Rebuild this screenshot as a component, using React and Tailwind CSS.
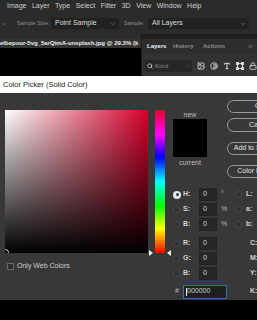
import React from 'react';
import { ChevronDown, ChevronsRight, Search, Image, Contrast, Type, Lock } from 'lucide-react';

const menu = ['Image', 'Layer', 'Type', 'Select', 'Filter', '3D', 'View', 'Window', 'Help'];

const Radio = ({ on }) =>
  on ? (
    <div className="w-[8px] h-[8px] rounded-full bg-[#e8e8e8] flex items-center justify-center">
      <div className="w-[3px] h-[3px] rounded-full bg-[#383838]"></div>
    </div>
  ) : (
    <div className="w-[7px] h-[7px] rounded-full bg-[#303030] border border-[#4c4c4c]"></div>
  );

const FieldRow = ({ on, label, value, unit, right, cmyk }) => (
  <div className="h-[15px] flex items-center text-[7px] text-[#d2d2d2]">
    <div className="w-[11px] pl-[1px]">
      <Radio on={on} />
    </div>
    <div className="w-[16px] font-bold">{label}</div>
    <div className="w-[18px] h-[13px] bg-[#272727] border border-[#222] flex items-center pl-[3px]">
      {value}
    </div>
    <div className="w-[18px] pl-[4px] text-[#bdbdbd]">{unit}</div>
    <div className="w-[11px]">{!cmyk && <Radio />}</div>
    <div className={cmyk ? 'pl-[4px] font-bold' : 'font-bold'}>{right}</div>
  </div>
);

const PillButton = ({ children, className }) => (
  <div
    className={`w-[66px] shrink-0 rounded-full border border-[#9c9c9c] flex items-center justify-center text-[7px] text-[#e2e2e2] ${className}`}
  >
    {children}
  </div>
);

const ShapeIcon = () => (
  <svg width="8" height="8" viewBox="0 0 8 8" fill="none" stroke="#d8d8d8" strokeWidth="1">
    <rect x="1.5" y="1.5" width="5" height="5" />
    <rect x="0.5" y="0.5" width="2" height="2" fill="#d8d8d8" />
    <rect x="5.5" y="0.5" width="2" height="2" fill="#d8d8d8" />
    <rect x="0.5" y="5.5" width="2" height="2" fill="#d8d8d8" />
    <rect x="5.5" y="5.5" width="2" height="2" fill="#d8d8d8" />
  </svg>
);

export default function App() {
  return (
    <div className="w-[257px] h-[320px] overflow-hidden bg-black flex flex-col font-['Liberation_Sans',Arial,sans-serif]">
      {/* menu bar */}
      <div className="h-[13px] shrink-0 bg-[#2b2b2b] flex items-center pl-[7px] gap-[5.5px] text-[7px] text-[#cdcdcd]">
        {menu.map((m) => (
          <span key={m}>{m}</span>
        ))}
      </div>

      {/* options bar */}
      <div className="h-[21px] shrink-0 bg-[#2b2b2b] flex items-center">
        <div className="w-[17px] pl-[1px] text-[#9a9a9a]">
          <ChevronDown size={6} strokeWidth={2} />
        </div>
        <div className="w-[34px] text-[5.5px] text-[#8f8f8f]">Sample Size:</div>
        <div className="w-[68px] h-[11px] bg-[#212121] flex items-center justify-between pl-[4px] pr-[3px] text-[7px] text-[#dedede]">
          <span>Point Sample</span>
          <ChevronDown size={6} strokeWidth={2} className="text-[#9a9a9a]" />
        </div>
        <div className="w-[5px]"></div>
        <div className="w-[24px] text-[5.5px] text-[#8f8f8f]">Sample:</div>
        <div className="w-[101px] h-[11px] bg-[#212121] flex items-center justify-between pl-[4px] pr-[3px] text-[7px] text-[#dedede]">
          <span>All Layers</span>
          <ChevronDown size={6} strokeWidth={2} className="text-[#9a9a9a]" />
        </div>
      </div>

      {/* document + layers panel */}
      <div className="h-[42px] shrink-0 flex">
        <div className="w-[141px] shrink-0 flex flex-col">
          <div className="h-[14px] bg-[#2b2b2b] flex items-end">
            <div className="h-[9px] w-full bg-[#333] flex items-center whitespace-nowrap overflow-hidden text-[6px] text-[#ececec] font-bold">
              elbepour-5vg_5arQimA-unsplash.jpg @ 29.3% (k
            </div>
          </div>
          <div className="flex-1 bg-black"></div>
        </div>
        <div className="flex-1 flex flex-col border-l border-[#1b1b1b]">
          <div className="h-[5px] bg-[#1f1f1f]"></div>
          <div className="h-[15px] bg-[#2d2d2d] flex items-center pl-[5px] text-[6px] font-bold">
            <span className="w-[26px] text-[#f0f0f0]">Layers</span>
            <span className="w-[30px] text-[#8c8c8c]">History</span>
            <span className="text-[#8c8c8c]">Actions</span>
            <ChevronsRight size={7} className="ml-auto mr-[3px] text-[#9a9a9a]" />
          </div>
          <div className="flex-1 bg-[#323232] flex items-start pt-[6px] pl-[3px] gap-[5px]">
            <div className="w-[47px] h-[12px] bg-[#262626] rounded-[2px] flex items-center px-[2px] gap-[2px] text-[6px] text-[#6f6f6f]">
              <Search size={6} strokeWidth={3} className="text-[#cfcfcf]" />
              <span className="font-bold">Kind</span>
              <ChevronDown size={5} className="ml-auto" />
            </div>
            <div className="h-[12px] flex items-center gap-[5px] text-[#d8d8d8]">
              <Image size={8} strokeWidth={2.5} />
              <Contrast size={8} strokeWidth={2.5} />
              <Type size={8} strokeWidth={3} />
              <ShapeIcon />
              <Lock size={8} strokeWidth={2.5} />
            </div>
          </div>
        </div>
      </div>

      {/* dialog title */}
      <div className="h-[17px] shrink-0 bg-white flex items-center pl-[3px] text-[7.5px] text-[#1c1c1c]">
        Color Picker (Solid Color)
      </div>

      {/* dialog body */}
      <div className="h-[207px] shrink-0 bg-[#383838] flex">
        <div className="w-[172px] shrink-0 pl-[5px] pt-[17px] flex flex-col">
          <div className="flex">
            <div className="relative w-[143px] h-[143px] overflow-hidden bg-[linear-gradient(to_top,#000,transparent),linear-gradient(to_right,#fff,#d6002a)]">
              <div className="absolute left-[-3px] bottom-[-3px] w-[7px] h-[7px] rounded-full border border-[#dcdcdc]"></div>
            </div>
            <div className="relative ml-[7px] w-[10px] h-[143px] bg-[linear-gradient(to_bottom,#e8002a_0%,#f0f_17%,#00f_33%,#0ff_50%,#0f0_67%,#ff0_83%,#f00_100%)]">
              <div className="absolute left-[-6px] bottom-[-3px] w-0 h-0 border-y-[3px] border-y-transparent border-l-[4px] border-l-[#eee]"></div>
              <div className="absolute right-[-6px] bottom-[-3px] w-0 h-0 border-y-[3px] border-y-transparent border-r-[4px] border-r-[#eee]"></div>
            </div>
          </div>
          <div className="mt-[8px] ml-[2px] flex items-center gap-[3px] text-[7px] text-[#cfcfcf]">
            <div className="w-[7px] h-[7px] border border-[#6a6a6a] bg-[#2e2e2e]"></div>
            <span>Only Web Colors</span>
          </div>
        </div>

        <div className="flex-1 flex flex-col">
          <div className="h-[94px] flex">
            <div className="w-[55px] shrink-0 pl-[1px] pt-[18px]">
              <div className="w-[34px] flex flex-col items-center text-[7px] text-[#bcbcbc]">
                <div className="h-[8px] leading-[8px]">new</div>
                <div className="w-[34px] h-[38px] bg-black"></div>
                <div className="mt-[2px] leading-[8px]">current</div>
              </div>
            </div>
            <div className="flex flex-col">
              <PillButton className="mt-[7px] h-[13px]">OK</PillButton>
              <PillButton className="mt-[5px] h-[14px]">Cancel</PillButton>
              <PillButton className="mt-[10px] h-[13px]">Add to Swatches</PillButton>
              <PillButton className="mt-[10px] h-[13px]">Color Libraries</PillButton>
            </div>
          </div>

          <FieldRow on label="H:" value="0" unit="°" right="L:" />
          <FieldRow label="S:" value="0" unit="%" right="a:" />
          <FieldRow label="B:" value="0" unit="%" right="b:" />
          <div className="h-[4px]"></div>
          <FieldRow label="R:" value="0" right="C:" cmyk />
          <FieldRow label="G:" value="0" right="M:" cmyk />
          <FieldRow label="B:" value="0" right="Y:" cmyk />

          <div className="mt-[3px] h-[15px] flex items-center text-[7px] text-[#d2d2d2]">
            <div className="w-[11px] pl-[3px] text-[#bdbdbd]">#</div>
            <div className="w-[44px] h-[14px] shrink-0 border border-[#3d6cb0] bg-[#1f1f1f] flex items-center pl-[2px]">
              <span className="w-[1px] h-[8px] bg-[#eee]"></span>
              <span>000000</span>
            </div>
            <div className="w-[23px] shrink-0"></div>
            <div className="font-bold">K:</div>
          </div>
        </div>
      </div>

      <div className="flex-1 bg-black"></div>
    </div>
  );
}
